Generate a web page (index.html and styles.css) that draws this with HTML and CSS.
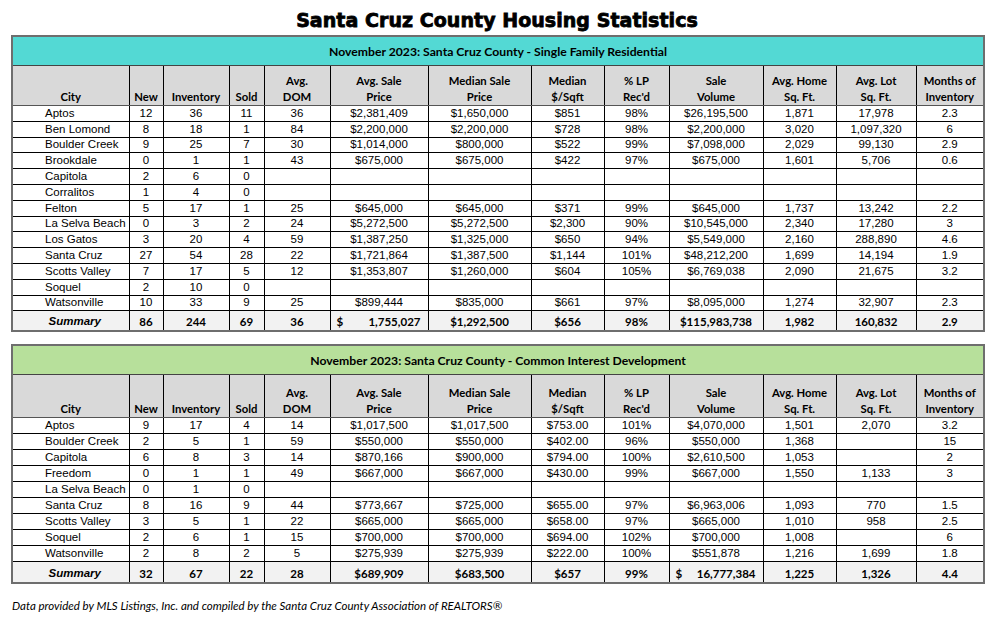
FILE: index.html
```html
<!DOCTYPE html>
<html lang="en">
<head>
<meta charset="utf-8">
<title>Santa Cruz County Housing Statistics</title>
<link rel="stylesheet" href="styles.css">
</head>
<body>
<div class="page">
  <h1 class="title">Santa Cruz County Housing Statistics</h1>

  <table class="stats sfr">
    <colgroup>
      <col class="c-city"><col class="c-new"><col class="c-inv"><col class="c-sold"><col class="c-dom">
      <col class="c-avgp"><col class="c-medp"><col class="c-sqft"><col class="c-lp"><col class="c-vol">
      <col class="c-home"><col class="c-lot"><col class="c-moi">
    </colgroup>
    <thead>
      <tr class="band"><th colspan="13">November 2023: Santa Cruz County - Single Family Residential</th></tr>
      <tr class="heads">
        <th>City</th><th>New</th><th>Inventory</th><th>Sold</th><th>Avg.<br>DOM</th>
        <th>Avg. Sale<br>Price</th><th>Median Sale<br>Price</th><th>Median<br>$/Sqft</th><th>% LP<br>Rec'd</th>
        <th>Sale<br>Volume</th><th>Avg. Home<br>Sq. Ft.</th><th>Avg. Lot<br>Sq. Ft.</th><th>Months of<br>Inventory</th>
      </tr>
    </thead>
    <tbody>
      <tr><td class="city">Aptos</td><td>12</td><td>36</td><td>11</td><td>36</td><td>$2,381,409</td><td>$1,650,000</td><td>$851</td><td>98%</td><td>$26,195,500</td><td>1,871</td><td>17,978</td><td>2.3</td></tr>
      <tr><td class="city">Ben Lomond</td><td>8</td><td>18</td><td>1</td><td>84</td><td>$2,200,000</td><td>$2,200,000</td><td>$728</td><td>98%</td><td>$2,200,000</td><td>3,020</td><td>1,097,320</td><td>6</td></tr>
      <tr><td class="city">Boulder Creek</td><td>9</td><td>25</td><td>7</td><td>30</td><td>$1,014,000</td><td>$800,000</td><td>$522</td><td>99%</td><td>$7,098,000</td><td>2,029</td><td>99,130</td><td>2.9</td></tr>
      <tr><td class="city">Brookdale</td><td>0</td><td>1</td><td>1</td><td>43</td><td>$675,000</td><td>$675,000</td><td>$422</td><td>97%</td><td>$675,000</td><td>1,601</td><td>5,706</td><td>0.6</td></tr>
      <tr><td class="city">Capitola</td><td>2</td><td>6</td><td>0</td><td></td><td></td><td></td><td></td><td></td><td></td><td></td><td></td><td></td></tr>
      <tr><td class="city">Corralitos</td><td>1</td><td>4</td><td>0</td><td></td><td></td><td></td><td></td><td></td><td></td><td></td><td></td><td></td></tr>
      <tr><td class="city">Felton</td><td>5</td><td>17</td><td>1</td><td>25</td><td>$645,000</td><td>$645,000</td><td>$371</td><td>99%</td><td>$645,000</td><td>1,737</td><td>13,242</td><td>2.2</td></tr>
      <tr><td class="city">La Selva Beach</td><td>0</td><td>3</td><td>2</td><td>24</td><td>$5,272,500</td><td>$5,272,500</td><td>$2,300</td><td>90%</td><td>$10,545,000</td><td>2,340</td><td>17,280</td><td>3</td></tr>
      <tr><td class="city">Los Gatos</td><td>3</td><td>20</td><td>4</td><td>59</td><td>$1,387,250</td><td>$1,325,000</td><td>$650</td><td>94%</td><td>$5,549,000</td><td>2,160</td><td>288,890</td><td>4.6</td></tr>
      <tr><td class="city">Santa Cruz</td><td>27</td><td>54</td><td>28</td><td>22</td><td>$1,721,864</td><td>$1,387,500</td><td>$1,144</td><td>101%</td><td>$48,212,200</td><td>1,699</td><td>14,194</td><td>1.9</td></tr>
      <tr><td class="city">Scotts Valley</td><td>7</td><td>17</td><td>5</td><td>12</td><td>$1,353,807</td><td>$1,260,000</td><td>$604</td><td>105%</td><td>$6,769,038</td><td>2,090</td><td>21,675</td><td>3.2</td></tr>
      <tr><td class="city">Soquel</td><td>2</td><td>10</td><td>0</td><td></td><td></td><td></td><td></td><td></td><td></td><td></td><td></td><td></td></tr>
      <tr><td class="city">Watsonville</td><td>10</td><td>33</td><td>9</td><td>25</td><td>$899,444</td><td>$835,000</td><td>$661</td><td>97%</td><td>$8,095,000</td><td>1,274</td><td>32,907</td><td>2.3</td></tr>
      <tr class="summary">
        <td class="label">Summary</td><td>86</td><td>244</td><td>69</td><td>36</td>
        <td class="acct"><span class="acct-inner"><span>$</span><span>1,755,027</span></span></td>
        <td>$1,292,500</td><td>$656</td><td>98%</td><td>$115,983,738</td><td>1,982</td><td>160,832</td><td>2.9</td>
      </tr>
    </tbody>
  </table>

  <table class="stats cid">
    <colgroup>
      <col class="c-city"><col class="c-new"><col class="c-inv"><col class="c-sold"><col class="c-dom">
      <col class="c-avgp"><col class="c-medp"><col class="c-sqft"><col class="c-lp"><col class="c-vol">
      <col class="c-home"><col class="c-lot"><col class="c-moi">
    </colgroup>
    <thead>
      <tr class="band"><th colspan="13">November 2023: Santa Cruz County - Common Interest Development</th></tr>
      <tr class="heads">
        <th>City</th><th>New</th><th>Inventory</th><th>Sold</th><th>Avg.<br>DOM</th>
        <th>Avg. Sale<br>Price</th><th>Median Sale<br>Price</th><th>Median<br>$/Sqft</th><th>% LP<br>Rec'd</th>
        <th>Sale<br>Volume</th><th>Avg. Home<br>Sq. Ft.</th><th>Avg. Lot<br>Sq. Ft.</th><th>Months of<br>Inventory</th>
      </tr>
    </thead>
    <tbody>
      <tr><td class="city">Aptos</td><td>9</td><td>17</td><td>4</td><td>14</td><td>$1,017,500</td><td>$1,017,500</td><td>$753.00</td><td>101%</td><td>$4,070,000</td><td>1,501</td><td>2,070</td><td>3.2</td></tr>
      <tr><td class="city">Boulder Creek</td><td>2</td><td>5</td><td>1</td><td>59</td><td>$550,000</td><td>$550,000</td><td>$402.00</td><td>96%</td><td>$550,000</td><td>1,368</td><td></td><td>15</td></tr>
      <tr><td class="city">Capitola</td><td>6</td><td>8</td><td>3</td><td>14</td><td>$870,166</td><td>$900,000</td><td>$794.00</td><td>100%</td><td>$2,610,500</td><td>1,053</td><td></td><td>2</td></tr>
      <tr><td class="city">Freedom</td><td>0</td><td>1</td><td>1</td><td>49</td><td>$667,000</td><td>$667,000</td><td>$430.00</td><td>99%</td><td>$667,000</td><td>1,550</td><td>1,133</td><td>3</td></tr>
      <tr><td class="city">La Selva Beach</td><td>0</td><td>1</td><td>0</td><td></td><td></td><td></td><td></td><td></td><td></td><td></td><td></td><td></td></tr>
      <tr><td class="city">Santa Cruz</td><td>8</td><td>16</td><td>9</td><td>44</td><td>$773,667</td><td>$725,000</td><td>$655.00</td><td>97%</td><td>$6,963,006</td><td>1,093</td><td>770</td><td>1.5</td></tr>
      <tr><td class="city">Scotts Valley</td><td>3</td><td>5</td><td>1</td><td>22</td><td>$665,000</td><td>$665,000</td><td>$658.00</td><td>97%</td><td>$665,000</td><td>1,010</td><td>958</td><td>2.5</td></tr>
      <tr><td class="city">Soquel</td><td>2</td><td>6</td><td>1</td><td>15</td><td>$700,000</td><td>$700,000</td><td>$694.00</td><td>102%</td><td>$700,000</td><td>1,008</td><td></td><td>6</td></tr>
      <tr><td class="city">Watsonville</td><td>2</td><td>8</td><td>2</td><td>5</td><td>$275,939</td><td>$275,939</td><td>$222.00</td><td>100%</td><td>$551,878</td><td>1,216</td><td>1,699</td><td>1.8</td></tr>
      <tr class="summary">
        <td class="label">Summary</td><td>32</td><td>67</td><td>22</td><td>28</td>
        <td>$689,909</td><td>$683,500</td><td>$657</td><td>99%</td>
        <td class="acct"><span class="acct-inner"><span>$</span><span>16,777,384</span></span></td>
        <td>1,225</td><td>1,326</td><td>4.4</td>
      </tr>
    </tbody>
  </table>

  <p class="source">Data provided by MLS Listings, Inc. and compiled by the Santa Cruz County Association of REALTORS®</p>
</div>
</body>
</html>
```

FILE: styles.css
```css
html, body {
  margin: 0;
  padding: 0;
  background: #ffffff;
}

body {
  font-family: "Liberation Sans", Arial, sans-serif;
  color: #000;
}

.page {
  width: 1000px;
  padding: 9px 0 0 11px;
  box-sizing: border-box;
}

.title {
  width: 972px;
  margin: 0;
  text-align: center;
  font-family: "DejaVu Sans", sans-serif;
  font-weight: 700;
  font-size: 19px;
  line-height: 22px;
  -webkit-text-stroke: 0.8px #000;
  letter-spacing: 0.05px;
}

.stats {
  width: 972px;
  table-layout: fixed;
  border-collapse: collapse;
  border: 2px solid #6e6e6e;
  margin-top: 4px;
}

.stats.cid {
  margin-top: 12px;
}

.c-city { width: 117px; }
.c-new { width: 34px; }
.c-inv { width: 66px; }
.c-sold { width: 35px; }
.c-dom { width: 66px; }
.c-avgp { width: 98px; }
.c-medp { width: 103px; }
.c-sqft { width: 73px; }
.c-lp { width: 65px; }
.c-vol { width: 94px; }
.c-home { width: 73px; }
.c-lot { width: 80px; }
.c-moi { width: 68px; }

.stats th,
.stats td {
  border: 1px solid #000;
  padding: 0 2px;
  text-align: center;
  white-space: nowrap;
  overflow: hidden;
}

.band th {
  height: 27px;
  font-family: Lato, "Open Sans", sans-serif;
  font-weight: 700;
  font-size: 12.2px;
  border-bottom: 1px solid #444;
  padding-top: 1px;
}

.sfr .band th { background: #53d9d4; }
.cid .band th { background: #b7e09b; }

.heads th {
  background: #d9d9d9;
  font-family: Lato, "Open Sans", sans-serif;
  font-weight: 700;
  font-size: 11.3px;
  line-height: 15.5px;
  vertical-align: bottom;
  padding-bottom: 1px;
  border-color: #555 #000;
  height: 38px;
}

.cid .heads th { height: 41px; }

.stats td {
  font-size: 11.5px;
  line-height: 13px;
  height: 14.8px;
}

.cid td { height: 15px; }

.stats td.city {
  text-align: left;
  padding-left: 32px;
}

.summary td {
  background: #f2f2f2;
  font-family: Lato, "Open Sans", sans-serif;
  font-weight: 700;
  font-size: 11.5px;
  height: 17px;
  padding-top: 2px;
}

.cid .summary td { height: 18px; }

.summary td.label {
  font-family: "Liberation Sans", Arial, sans-serif;
  font-style: italic;
  font-size: 11.5px;
  padding-left: 10px;
}

.acct-inner {
  display: flex;
  justify-content: space-between;
  padding: 0 5px 0 4px;
}

.source {
  margin: 14px 0 0 1px;
  font-family: Lato, "Open Sans", sans-serif;
  font-style: italic;
  font-size: 11.5px;
  line-height: 15px;
}
```
